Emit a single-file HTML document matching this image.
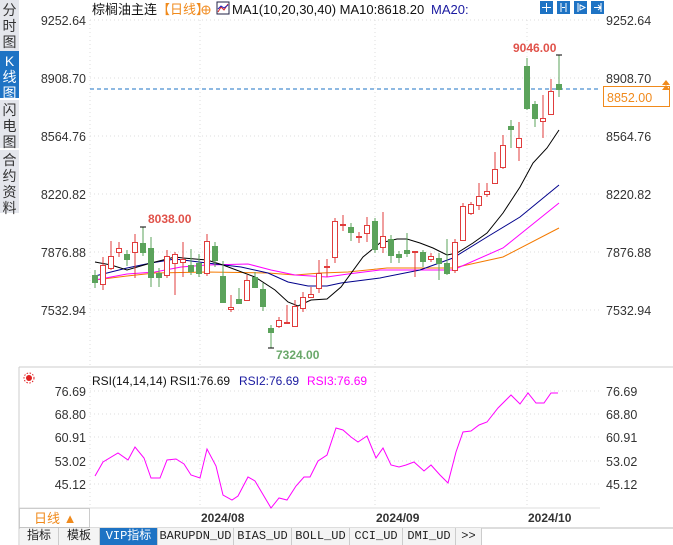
<!DOCTYPE html><html><head><meta charset="utf-8"><style>
body{margin:0;width:673px;height:545px;overflow:hidden;background:#fff;font-family:"Liberation Sans","Noto Sans CJK SC",sans-serif}
.sb{position:absolute;left:0;width:19px;background:#e4e6ec;color:#333;font-size:14px;line-height:16px;text-align:center;font-family:"Liberation Sans","Noto Sans CJK SC",sans-serif}
.tab{position:absolute;top:528px;height:17px;font-size:12px;line-height:17px;text-align:center;border-right:1px solid #ccc;color:#222;background:#f4f4f4;font-family:"Liberation Mono","Noto Sans CJK SC",monospace}
</style></head><body>
<div class="sb" style="top:0;height:49px;padding-top:2px">分<br>时<br>图</div>
<div class="sb" style="top:51px;height:45px;background:#1e73c4;color:#fff;padding-top:2px">K<br>线<br>图</div>
<div class="sb" style="top:100px;height:46px;padding-top:2px">闪<br>电<br>图</div>
<div class="sb" style="top:150px;height:61px;padding-top:2px">合<br>约<br>资<br>料</div>
<svg width="673" height="545" style="position:absolute;left:0;top:0" font-family="Liberation Sans, Noto Sans CJK SC, sans-serif">
<g stroke="#ddd" stroke-dasharray="1,3">
<line x1="90" y1="20" x2="600" y2="20"/><line x1="90" y1="78" x2="600" y2="78"/><line x1="90" y1="136" x2="600" y2="136"/><line x1="90" y1="194" x2="600" y2="194"/><line x1="90" y1="252" x2="600" y2="252"/><line x1="90" y1="310" x2="600" y2="310"/>
<line x1="90" y1="391" x2="600" y2="391"/><line x1="90" y1="414" x2="600" y2="414"/><line x1="90" y1="437" x2="600" y2="437"/><line x1="90" y1="461" x2="600" y2="461"/><line x1="90" y1="484" x2="600" y2="484"/>
<line x1="200" y1="20" x2="200" y2="367"/><line x1="375" y1="20" x2="375" y2="367"/><line x1="527" y1="20" x2="527" y2="367"/>
<line x1="200" y1="372" x2="200" y2="508"/><line x1="375" y1="372" x2="375" y2="508"/><line x1="527" y1="372" x2="527" y2="508"/>
<line x1="90" y1="20" x2="90" y2="367"/><line x1="90" y1="372" x2="90" y2="508"/>
</g>
<line x1="19" y1="367" x2="673" y2="367" stroke="#ccc"/>
<line x1="19" y1="508" x2="600" y2="508" stroke="#ddd"/>
<line x1="19" y1="367" x2="19" y2="545" stroke="#ccc"/>
<line x1="90" y1="89" x2="600" y2="89" stroke="#1e73c4" stroke-dasharray="4,3"/>
<g font-size="12.5" fill="#333" text-anchor="end">
<text x="86" y="25">9252.64</text><text x="86" y="83">8908.70</text><text x="86" y="141">8564.76</text><text x="86" y="199">8220.82</text><text x="86" y="257">7876.88</text><text x="86" y="315">7532.94</text>
<text x="86" y="396">76.69</text><text x="86" y="419">68.80</text><text x="86" y="442">60.91</text><text x="86" y="466">53.02</text><text x="86" y="489">45.12</text>
</g>
<g font-size="12.5" fill="#333">
<text x="606" y="25">9252.64</text><text x="606" y="83">8908.70</text><text x="606" y="141">8564.76</text><text x="606" y="199">8220.82</text><text x="606" y="257">7876.88</text><text x="606" y="315">7532.94</text>
<text x="606" y="396">76.69</text><text x="606" y="419">68.80</text><text x="606" y="442">60.91</text><text x="606" y="466">53.02</text><text x="606" y="489">45.12</text>
</g>
<rect x="603.5" y="86.5" width="66" height="20" fill="#fff" stroke="#f08a1c"/>
<text x="607" y="102" font-size="12.5" fill="#f08a1c">8852.00</text>
<path d="M662 85 l4 -5 l4 5z M662 90 l4 -5 l4 5z" fill="#f08a1c"/>
<text x="92" y="14" font-size="13" fill="#111">棕榈油主连</text>
<text x="157" y="14" font-size="13" fill="#f08a1c">【日线】</text>
<circle cx="206" cy="10" r="4" fill="none" stroke="#f08a1c"/><path d="M202 10h8M206 6v8" stroke="#f08a1c"/>
<rect x="217" y="2" width="12" height="12" fill="#fff" stroke="#224"/><path d="M218 12l3-5 3 3 4-6" stroke="#d22" fill="none"/><path d="M218 9l3-3 3 2 4-3" stroke="#22b" fill="none"/>
<text x="232" y="14" font-size="13" fill="#111">MA1(10,20,30,40) MA10:8618.20</text>
<text x="431" y="14" font-size="13" fill="#1a1aa0">MA20:</text>
<g fill="#1e73c4"><rect x="540" y="1" width="13" height="13"/><rect x="557" y="1" width="13" height="13"/><rect x="574" y="1" width="13" height="13"/><rect x="591" y="1" width="13" height="13"/></g>
<path d="M546.5 3v9M542 7.5h9M561 3v9M566 3v9M562 7.5h3M578 3v9M580 5l5 2.5-5 2.5z M594 7.5h6M598 5l3 2.5-3 2.5M601 3v9" stroke="#fff" fill="none"/>
<g fill="none" stroke-width="1">
<polyline stroke="#f47a00" points="95,280 127,276 155,273 207,272 268,273 295,275 321,273 348,272 387,268 453,268 503,257 559,228"/>
<polyline stroke="#f0f" points="95,280 127,274 155,272 181,267 207,265 248,264 271,270 295,275 327,277 348,274 380,270 453,270 503,248 559,203"/>
<polyline stroke="#00008b" points="95,276 127,268 151,263 175,259 207,263 241,267 268,273 288,282 308,286 327,286 341,283 380,278 420,270 453,258 487,237 520,217 559,185"/>
<polyline stroke="#000" points="95,262 111,265 127,270 151,263 175,257 183,258 207,260 223,265 255,277 275,290 288,302 298,306 311,300 327,299 341,287 363,257 380,243 397,239 407,239 420,243 433,248 447,255 457,253 473,243 487,233 503,213 520,187 533,163 547,148 559,130"/>
</g>
<g stroke="#5ba35b" fill="#5ba35b">
<line x1="95" y1="270" x2="95" y2="288"/><rect x="92.5" y="275.5" width="5" height="7"/>
<line x1="127" y1="250" x2="127" y2="266"/><rect x="124.5" y="254.5" width="5" height="5"/>
<line x1="143" y1="227" x2="143" y2="256"/><rect x="140.5" y="243.5" width="5" height="9"/>
<line x1="151" y1="237" x2="151" y2="287"/><rect x="148.5" y="248.5" width="5" height="29"/>
<line x1="159" y1="268" x2="159" y2="287"/><rect x="156.5" y="273.5" width="5" height="4"/>
<line x1="191" y1="249" x2="191" y2="275"/><rect x="188.5" y="265.5" width="5" height="6"/>
<line x1="199" y1="254" x2="199" y2="277"/><rect x="196.5" y="263.5" width="5" height="10"/>
<line x1="215" y1="242" x2="215" y2="267"/><rect x="212.5" y="246.5" width="5" height="14"/>
<line x1="223" y1="261" x2="223" y2="303"/><rect x="220.5" y="276.5" width="5" height="26"/>
<line x1="239" y1="288" x2="239" y2="304"/><rect x="236.5" y="299.5" width="5" height="4"/>
<line x1="255" y1="272" x2="255" y2="288"/><rect x="252.5" y="277.5" width="5" height="10"/>
<line x1="263" y1="283" x2="263" y2="311"/><rect x="260.5" y="289.5" width="5" height="17"/>
<line x1="271" y1="325" x2="271" y2="348"/><rect x="268.5" y="328.5" width="5" height="4"/>
<line x1="351" y1="223" x2="351" y2="241"/><rect x="348.5" y="227.5" width="5" height="5"/>
<line x1="375" y1="218" x2="375" y2="253"/><rect x="372.5" y="221.5" width="5" height="28"/>
<line x1="391" y1="235" x2="391" y2="263"/><rect x="388.5" y="239.5" width="5" height="16"/>
<line x1="399" y1="251" x2="399" y2="263"/><rect x="396.5" y="254.5" width="5" height="3"/>
<line x1="407" y1="233" x2="407" y2="257"/><rect x="404.5" y="250.5" width="5" height="3"/>
<line x1="423" y1="250" x2="423" y2="267"/><rect x="420.5" y="252.5" width="5" height="9"/>
<line x1="439" y1="253" x2="439" y2="280"/><rect x="436.5" y="258.5" width="5" height="5"/>
<line x1="447" y1="239" x2="447" y2="275"/><rect x="444.5" y="263.5" width="5" height="10"/>
<line x1="511" y1="120" x2="511" y2="148"/><rect x="508.5" y="126.5" width="5" height="3"/>
<line x1="527" y1="58" x2="527" y2="110"/><rect x="524.5" y="66.5" width="5" height="42"/>
<line x1="535" y1="101" x2="535" y2="127"/><rect x="532.5" y="104.5" width="5" height="14"/>
<line x1="559" y1="55" x2="559" y2="97"/><rect x="556.5" y="84.5" width="5" height="5"/>
</g>
<g stroke="#e03c3c" fill="#fff">
<line x1="103" y1="257" x2="103" y2="290"/><rect x="100.5" y="265.5" width="5" height="19"/>
<line x1="111" y1="241" x2="111" y2="270"/><rect x="108.5" y="256.5" width="5" height="12"/>
<line x1="119" y1="242" x2="119" y2="257"/><rect x="116.5" y="248.5" width="5" height="4"/>
<line x1="135" y1="234" x2="135" y2="278"/><rect x="132.5" y="242.5" width="5" height="10"/>
<line x1="167" y1="250" x2="167" y2="278"/><rect x="164.5" y="256.5" width="5" height="19"/>
<line x1="175" y1="252" x2="175" y2="295"/><rect x="172.5" y="254.5" width="5" height="9"/>
<line x1="183" y1="242" x2="183" y2="277"/><rect x="180.5" y="259.5" width="5" height="3"/>
<line x1="207" y1="234" x2="207" y2="276"/><rect x="204.5" y="241.5" width="5" height="32"/>
<line x1="231" y1="295" x2="231" y2="312"/><rect x="228.5" y="307.5" width="5" height="2"/>
<line x1="247" y1="275" x2="247" y2="300"/><rect x="244.5" y="280.5" width="5" height="20"/>
<line x1="279" y1="317" x2="279" y2="328"/><rect x="276.5" y="320.5" width="5" height="6"/>
<line x1="287" y1="305" x2="287" y2="323"/><rect x="284.5" y="322.5" width="5" height="1"/>
<line x1="295" y1="300" x2="295" y2="327"/><rect x="292.5" y="306.5" width="5" height="20"/>
<line x1="303" y1="292" x2="303" y2="312"/><rect x="300.5" y="297.5" width="5" height="11"/>
<line x1="311" y1="287" x2="311" y2="297"/><rect x="308.5" y="294.5" width="5" height="3"/>
<line x1="319" y1="260" x2="319" y2="293"/><rect x="316.5" y="273.5" width="5" height="15"/>
<line x1="327" y1="259" x2="327" y2="277"/><rect x="324.5" y="266.5" width="5" height="1"/>
<line x1="335" y1="218" x2="335" y2="263"/><rect x="332.5" y="221.5" width="5" height="36"/>
<line x1="343" y1="215" x2="343" y2="231"/><rect x="340.5" y="224.5" width="5" height="1"/>
<line x1="359" y1="232" x2="359" y2="243"/><rect x="356.5" y="236.5" width="5" height="1"/>
<line x1="367" y1="217" x2="367" y2="242"/><rect x="364.5" y="225.5" width="5" height="8"/>
<line x1="383" y1="212" x2="383" y2="253"/><rect x="380.5" y="236.5" width="5" height="11"/>
<line x1="415" y1="251" x2="415" y2="277"/><rect x="412.5" y="251.5" width="5" height="1"/>
<line x1="431" y1="253" x2="431" y2="262"/><rect x="428.5" y="256.5" width="5" height="3"/>
<line x1="455" y1="239" x2="455" y2="273"/><rect x="452.5" y="242.5" width="5" height="28"/>
<line x1="463" y1="203" x2="463" y2="240"/><rect x="460.5" y="206.5" width="5" height="34"/>
<line x1="471" y1="202" x2="471" y2="215"/><rect x="468.5" y="204.5" width="5" height="9"/>
<line x1="479" y1="183" x2="479" y2="210"/><rect x="476.5" y="196.5" width="5" height="9"/>
<line x1="487" y1="183" x2="487" y2="197"/><rect x="484.5" y="191.5" width="5" height="3"/>
<line x1="495" y1="152" x2="495" y2="184"/><rect x="492.5" y="169.5" width="5" height="14"/>
<line x1="503" y1="135" x2="503" y2="169"/><rect x="500.5" y="145.5" width="5" height="22"/>
<line x1="519" y1="122" x2="519" y2="161"/><rect x="516.5" y="138.5" width="5" height="9"/>
<line x1="543" y1="95" x2="543" y2="138"/><rect x="540.5" y="118.5" width="5" height="3"/>
<line x1="551" y1="79" x2="551" y2="115"/><rect x="548.5" y="91.5" width="5" height="23"/>
</g>
<path d="M140 227h6M268 348h6M556 55h6" stroke="#000"/>
<text x="148" y="223" font-size="12" font-weight="bold" fill="#e0524a">8038.00</text>
<text x="276" y="359" font-size="12" font-weight="bold" fill="#6aa86a">7324.00</text>
<text x="513" y="52" font-size="12" font-weight="bold" fill="#e0524a">9046.00</text>
<circle cx="29" cy="378" r="3" fill="#e02020"/><circle cx="29" cy="378" r="5" fill="none" stroke="#e02020" stroke-dasharray="1.5,1.5"/>
<text x="92" y="385" font-size="12" fill="#111">RSI(14,14,14) RSI1:76.69</text>
<text x="239" y="385" font-size="12" fill="#1a1aa0">RSI2:76.69</text>
<text x="307" y="385" font-size="12" fill="#f0f">RSI3:76.69</text>
<polyline fill="none" stroke="#f0f" points="95,476 103,462 118,453 128,460 135,447 144,458 151,478 160,478 167,460 176,459 184,464 191,475 200,478 207,449 216,466 223,495 232,500 238,496 248,477 255,481 271,508 279,498 287,500 296,486 304,477 310,477 318,461 327,455 336,428 343,430 351,437 358,442 367,436 376,458 383,448 391,465 399,467 406,465 414,462 424,471 431,465 440,475 448,483 456,452 463,432 471,431 479,425 487,422 498,408 511,395 520,404 528,393 536,403 544,403 551,393 558,393"/>
<g font-size="12" font-weight="bold" fill="#333">
<text x="201" y="522">2024/08</text><text x="376" y="522">2024/09</text><text x="528" y="522">2024/10</text>
</g>
<rect x="19.5" y="508.5" width="70" height="19" fill="#fff" stroke="#ccc"/>
<text x="34" y="523" font-size="13" fill="#f08a1c">日线 ▲</text>
<line x1="19" y1="528" x2="673" y2="528" stroke="#bbb"/>
</svg>
<div class="tab" style="left:20px;width:38px">指标</div>
<div class="tab" style="left:59px;width:40px">模板</div>
<div class="tab" style="left:100px;width:57px;background:#1e73c4;color:#fff">VIP指标</div>
<div class="tab" style="left:158px;width:75px">BARUPDN_UD</div>
<div class="tab" style="left:234px;width:57px">BIAS_UD</div>
<div class="tab" style="left:292px;width:57px">BOLL_UD</div>
<div class="tab" style="left:350px;width:52px">CCI_UD</div>
<div class="tab" style="left:403px;width:52px">DMI_UD</div>
<div class="tab" style="left:456px;width:25px">&gt;&gt;</div>
</body></html>
